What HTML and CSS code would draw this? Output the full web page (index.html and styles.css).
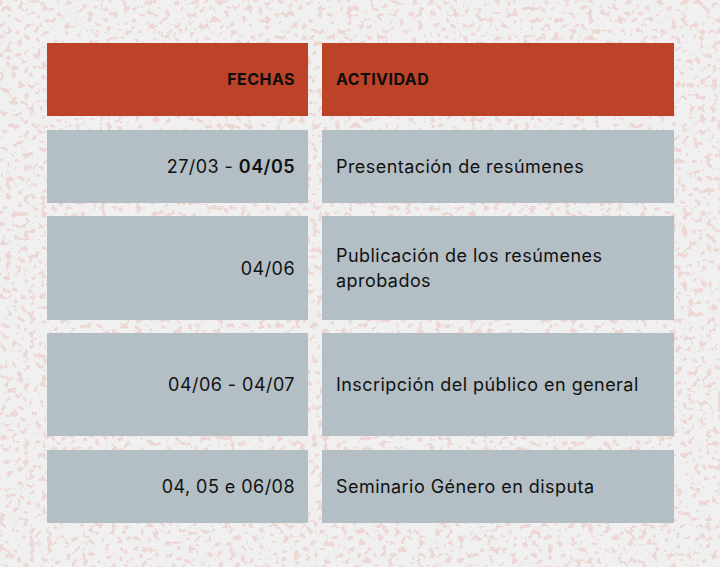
FILE: index.html
```html
<!DOCTYPE html>
<html lang="es">
<head>
<meta charset="utf-8">
<title>Cronograma</title>
<link rel="stylesheet" href="styles.css">
</head>
<body>
<svg class="texture" width="720" height="567" aria-hidden="true">
  <filter id="speckle" x="0" y="0" width="100%" height="100%" color-interpolation-filters="sRGB">
    <feTurbulence type="fractalNoise" baseFrequency="0.17" numOctaves="3" seed="11" result="t"/>
    <feColorMatrix in="t" type="matrix" values="0 0 0 0 0.925  0 0 0 0 0.845  0 0 0 0 0.835  1 0 0 0 0"/>
    <feComponentTransfer>
      <feFuncA type="discrete" tableValues="0 0 0 0 0 0 0 0 0 0 0 0 0.7 1 1 1 1 1 1 1"/>
    </feComponentTransfer>
  </filter>
  <rect width="720" height="567" filter="url(#speckle)"/>
</svg>
<main class="page">
  <div class="schedule">
    <div class="cell head date"><span>FECHAS</span></div>
    <div class="cell head"><span>ACTIVIDAD</span></div>

    <div class="cell date"><span>27/03 - <b>04/05</b></span></div>
    <div class="cell"><span>Presentación de resúmenes</span></div>

    <div class="cell date"><span>04/06</span></div>
    <div class="cell"><span>Publicación de los resúmenes aprobados</span></div>

    <div class="cell date tall"><span>04/06 - 04/07</span></div>
    <div class="cell tall"><span>Inscripción del público en general</span></div>

    <div class="cell date"><span>04, 05 e 06/08</span></div>
    <div class="cell"><span>Seminario Género en disputa</span></div>
  </div>
</main>
</body>
</html>
```
FILE: styles.css
```css
html, body {
  margin: 0;
  padding: 0;
}
body {
  position: relative;
  width: 720px;
  height: 567px;
  overflow: hidden;
  background-color: #f1f0f0;
  font-family: Inter, "Open Sans", "Liberation Sans", sans-serif;
  color: #111;
}
.texture {
  position: absolute;
  left: 0;
  top: 0;
  z-index: 0;
}
.page {
  position: relative;
  z-index: 1;
  padding: 43px 0 0 47px;
}
.schedule {
  display: grid;
  grid-template-columns: 261px 352px;
  grid-template-rows: 74px 73px 104px 104px 73px;
  column-gap: 14px;
  row-gap: 13px;
}
.cell {
  background: #b3bfc5;
  display: flex;
  align-items: center;
  padding: 0 14px 0 14px;
  font-size: 18px;
  line-height: 25px;
  letter-spacing: 0.45px;
  color: #111;
}
.cell b {
  font-weight: 600;
}
.date {
  justify-content: flex-end;
  text-align: right;
  padding-right: 13px;
}
.head {
  background: #bc4327;
  font-weight: 700;
  font-size: 16px;
  letter-spacing: 0.45px;
  margin-bottom: 1px;
  color: #0d0d0d;
}
.tall {
  margin-bottom: 1px;
}
```
